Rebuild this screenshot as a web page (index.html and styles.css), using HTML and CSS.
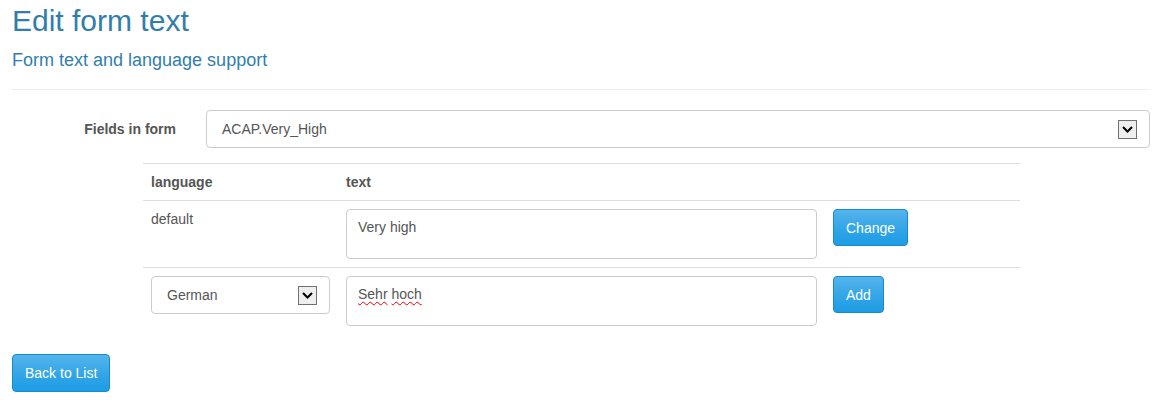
FILE: index.html
```html
<!DOCTYPE html>
<html>
<head>
<meta charset="utf-8">
<link rel="stylesheet" href="styles.css">
</head>
<body>
<div class="page">
  <h1 class="title">Edit form text</h1>
  <h2 class="subtitle">Form text and language support</h2>
  <div class="rule"></div>

  <div class="field-row">
    <label class="field-label">Fields in form</label>
    <div class="select wide">
      <span class="select-text">ACAP.Very_High</span>
      <span class="arrow"><svg width="11" height="7" viewBox="0 0 11 7"><path d="M1 1 L5.5 5.5 L10 1" fill="none" stroke="#000" stroke-width="2"/></svg></span>
    </div>
  </div>

  <table class="lang-table">
    <colgroup><col class="c1"><col class="c2"><col class="c3"></colgroup>
    <thead>
      <tr><th>language</th><th>text</th><th></th></tr>
    </thead>
    <tbody>
      <tr>
        <td>default</td>
        <td><div class="textarea">Very high</div></td>
        <td><button class="btn">Change</button></td>
      </tr>
      <tr>
        <td>
          <div class="select small">
            <span class="select-text">German</span>
            <span class="arrow"><svg width="11" height="7" viewBox="0 0 11 7"><path d="M1 1 L5.5 5.5 L10 1" fill="none" stroke="#000" stroke-width="2"/></svg></span>
          </div>
        </td>
        <td><div class="textarea"><span class="spell">Sehr</span> <span class="spell">hoch</span></div></td>
        <td><button class="btn">Add</button></td>
      </tr>
    </tbody>
  </table>

  <button class="btn back">Back to List</button>
</div>
</body>
</html>
```

FILE: styles.css
```css
html, body {
  margin: 0;
  padding: 0;
  background: #fff;
}
body {
  font-family: "Liberation Sans", Arial, Helvetica, sans-serif;
  font-size: 14px;
  line-height: 20px;
  color: #555;
}
.page {
  padding: 0 12px;
}
.title {
  margin: 2px 0 0 0;
  font-size: 30px;
  line-height: 38px;
  font-weight: normal;
  color: #317eac;
}
.subtitle {
  margin: 10px 0 0 0;
  font-size: 18px;
  line-height: 20px;
  font-weight: normal;
  color: #317eac;
}
.rule {
  margin-top: 19px;
  height: 1px;
  background: #eee;
}
.field-row {
  display: flex;
  align-items: center;
  margin-top: 20px;
  gap: 30px;
}
.field-label {
  width: 164px;
  text-align: right;
  font-weight: bold;
  color: #555;
}
.select {
  box-sizing: border-box;
  height: 38px;
  border: 1px solid #ccc;
  border-radius: 4px;
  background: #fff;
  display: flex;
  align-items: center;
  justify-content: space-between;
  padding: 0 12px 0 15px;
  color: #555;
}
.select.wide {
  flex: 1;
}
.select.small {
  width: 179px;
}
.arrow {
  box-sizing: border-box;
  width: 19px;
  height: 19px;
  border: 1px solid #707070;
  background: #efefef;
  display: flex;
  align-items: center;
  justify-content: center;
}
.lang-table {
  margin: 15px 0 0 131px;
  width: 877px;
  border-collapse: collapse;
  table-layout: fixed;
}
.c1 { width: 195px; }
.c2 { width: 487px; }
.c3 { width: 195px; }
.lang-table th,
.lang-table td {
  padding: 8px;
  text-align: left;
  vertical-align: top;
  border-top: 1px solid #ddd;
}
.lang-table th {
  font-weight: bold;
  color: #555;
  border-bottom: 1px solid #ddd;
}
.lang-table tbody tr:first-child td { border-top: 0; }
.textarea {
  box-sizing: border-box;
  height: 50px;
  border: 1px solid #ccc;
  border-radius: 4px;
  padding: 7px 11px;
  color: #555;
}
.spell {
  text-decoration: underline wavy #e00;
  text-decoration-thickness: 1px;
  text-underline-offset: 2px;
}
.btn {
  box-sizing: border-box;
  font-family: "Liberation Sans", Arial, Helvetica, sans-serif;
  font-size: 14px;
  line-height: 20px;
  color: #fff;
  padding: 8px 12px;
  height: 37px;
  border: 1px solid #178acc;
  border-radius: 4px;
  background: linear-gradient(#54b4eb, #2fa4e7 60%, #1d9ce5);
}
.back {
  margin-top: 20px;
  height: 38px;
}
```
